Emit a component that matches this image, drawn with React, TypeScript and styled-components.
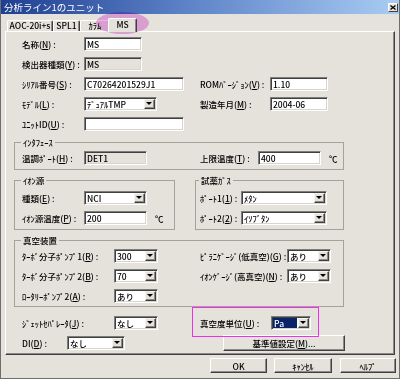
import React from 'react';
import styled, { createGlobalStyle } from 'styled-components';

const FS = '8.5px';
const BG = '#e5e2dc';

const GlobalStyle = createGlobalStyle`
  html, body {
    margin: 0;
    padding: 0;
    background: ${BG};
  }
  body {
    font-family: "Noto Sans CJK JP", "Liberation Sans", sans-serif;
    font-size: ${FS};
    font-weight: 500;
    color: #000;
  }
`;

const Window = styled.div`
  position: relative;
  width: 400px;
  height: 379px;
  box-sizing: border-box;
  background: ${BG};
  border: 1px solid #6e6e6e;
  border-top: none;
  overflow: hidden;
  display: flex;
  flex-direction: column;
`;

const TitleBar = styled.div`
  height: 14px;
  display: flex;
  align-items: center;
  justify-content: space-between;
  padding: 0 1px 0 3px;
  background: linear-gradient(to right, #1f3f90, #5b80c6 45%, #a9ccf3);
  color: #fff;
  font-size: 9.5px;
  font-weight: 400;
  line-height: 12px;
`;

const CloseBox = styled.div`
  width: 10px;
  height: 9px;
  box-sizing: border-box;
  background: ${BG};
  border: 1px solid;
  border-color: #fff #404040 #404040 #fff;
  display: flex;
  align-items: center;
  justify-content: center;
`;

const Body = styled.div`
  display: flex;
  flex-direction: column;
  padding: 4px 3px 0 4px;
`;

const TabStrip = styled.div`
  display: flex;
  align-items: flex-end;
  height: 13px;
  padding-left: 2px;
`;

const Tab = styled.div<{ $w: number; $active?: boolean }>`
  position: relative;
  box-sizing: border-box;
  width: ${(p) => p.$w}px;
  height: ${(p) => (p.$active ? 14 : 11)}px;
  margin: ${(p) => (p.$active ? '0 -2px -1px -2px' : '0')};
  z-index: ${(p) => (p.$active ? 1 : 0)};
  background: ${BG};
  border: 1px solid;
  border-color: #fff #404040 transparent #fff;
  border-bottom: none;
  border-radius: 2px 2px 0 0;
  box-shadow: inset -1px 0 0 #8a8a8a;
  display: flex;
  justify-content: center;
  padding-top: ${(p) => (p.$active ? 1 : 0)}px;
  line-height: 9px;
  font-size: ${FS};
  white-space: nowrap;
`;

const Panel = styled.div`
  width: 390px;
  height: 324px;
  box-sizing: border-box;
  border: 1px solid;
  border-color: #fff #404040 #404040 #fff;
  box-shadow: inset -1px -1px 0 #8a8a8a;
  padding: 2px 0 0 8px;
  display: flex;
  flex-direction: column;
`;

const Section = styled.div<{ $pl?: number; $mt?: number }>`
  display: flex;
  flex-direction: column;
  padding-left: ${(p) => p.$pl ?? 0}px;
  margin-top: ${(p) => p.$mt ?? 0}px;
`;

const Row = styled.div`
  display: flex;
  align-items: center;
  height: 20px;
`;

const Half = styled.div<{ $w: number }>`
  display: flex;
  align-items: center;
  width: ${(p) => p.$w}px;
  flex: none;
`;

const LabelText = styled.span<{ $w: number }>`
  display: inline-block;
  width: ${(p) => p.$w}px;
  flex: none;
  white-space: nowrap;
  line-height: 12px;
  font-size: ${FS};
`;

const Group = styled.fieldset<{ $w: number; $pl: number; $pt?: number; $pb?: number; $mt?: number }>`
  width: ${(p) => p.$w}px;
  box-sizing: border-box;
  margin: ${(p) => p.$mt ?? 0}px 0 0 0;
  padding: ${(p) => p.$pt ?? 0}px 0 ${(p) => p.$pb ?? 0}px ${(p) => p.$pl}px;
  border: 1px solid #a5a29b;
  min-width: 0;
`;

const Legend = styled.legend`
  padding: 0 2px;
  margin-left: -1px;
  line-height: 12px;
  font-size: ${FS};
  white-space: nowrap;
`;

const GroupPair = styled.div`
  display: flex;
  gap: 20px;
  margin-top: 4px;
`;

const sunken = `
  box-sizing: border-box;
  height: 14px;
  border: 1px solid;
  border-color: #7d7d7d #fff #fff #7d7d7d;
  box-shadow: inset 1px 1px 0 #404040, inset -1px -1px 0 #d8d5ce;
`;

const TextBox = styled.div<{ $w: number; $ro?: boolean }>`
  ${sunken}
  width: ${(p) => p.$w}px;
  flex: none;
  background: ${(p) => (p.$ro ? BG : '#fff')};
  padding: 0 2px;
  font-size: ${FS};
  line-height: 12px;
  white-space: nowrap;
  overflow: hidden;
`;

const Combo = styled.div<{ $w: number }>`
  ${sunken}
  width: ${(p) => p.$w}px;
  flex: none;
  background: #fff;
  padding: 1px;
  display: flex;
  align-items: stretch;
`;

const ComboText = styled.span<{ $sel?: boolean }>`
  flex: 1;
  padding-left: 1px;
  margin-right: 1px;
  font-size: ${FS};
  line-height: 10px;
  white-space: nowrap;
  overflow: hidden;
  background: ${(p) => (p.$sel ? '#0a246a' : 'transparent')};
  color: ${(p) => (p.$sel ? '#fff' : '#000')};
`;

const DropBtn = styled.span`
  width: 11px;
  flex: none;
  box-sizing: border-box;
  background: ${BG};
  border: 1px solid;
  border-color: #f4f3ef #404040 #404040 #f4f3ef;
  box-shadow: inset -1px -1px 0 #8a8a8a;
  display: flex;
  align-items: center;
  justify-content: center;
  &::after {
    content: '';
    width: 0;
    height: 0;
    margin: 0 1px 1px 0;
    border-left: 3px solid transparent;
    border-right: 3px solid transparent;
    border-top: 3px solid #000;
  }
`;

const Unit = styled.span`
  margin-left: 8px;
  line-height: 12px;
  font-size: ${FS};
`;

const PushButton = styled.div<{ $w: number; $h?: number; $ml?: number }>`
  width: ${(p) => p.$w}px;
  height: ${(p) => p.$h ?? 15}px;
  margin-left: ${(p) => p.$ml ?? 0}px;
  flex: none;
  box-sizing: border-box;
  background: ${BG};
  border: 1px solid;
  border-color: #fff #404040 #404040 #fff;
  box-shadow: inset -1px -1px 0 #8a8a8a;
  display: flex;
  align-items: center;
  justify-content: center;
  font-size: ${FS};
  line-height: 12px;
  white-space: nowrap;
`;

const ButtonBar = styled.div`
  display: flex;
  justify-content: flex-end;
  margin-top: 3px;
`;

const TabMark = styled.div`
  position: absolute;
  left: 95px;
  top: 12px;
  width: 53px;
  height: 22px;
  border-radius: 50%;
  background: rgb(238, 165, 238);
  mix-blend-mode: multiply;
  opacity: 0.85;
  pointer-events: none;
`;

const FieldMark = styled.div`
  position: absolute;
  left: 191px;
  top: 307px;
  width: 127px;
  height: 30px;
  box-sizing: border-box;
  border: 1px solid #ee30ee;
  pointer-events: none;
`;

const Lbl: React.FC<{ w: number; t: string; k: string; tail?: string }> = ({ w, t, k, tail = ' :' }) => (
  <LabelText $w={w}>
    {t}(<u>{k}</u>){tail}
  </LabelText>
);

const Select: React.FC<{ w: number; v: string; sel?: boolean }> = ({ w, v, sel }) => (
  <Combo $w={w}>
    <ComboText $sel={sel}>{v}</ComboText>
    <DropBtn />
  </Combo>
);

const App: React.FC = () => {
  return (
    <>
      <GlobalStyle />
      <Window>
        <TitleBar>
          <span>分析ライン1のユニット</span>
          <CloseBox>
            <svg width="6" height="5" viewBox="0 0 6 5">
              <path d="M0.5 0.5 L5.5 4.5 M5.5 0.5 L0.5 4.5" stroke="#000" strokeWidth="1.3" />
            </svg>
          </CloseBox>
        </TitleBar>
        <Body>
          <TabStrip>
            <Tab $w={46}>AOC-20i+s</Tab>
            <Tab $w={27}>SPL1</Tab>
            <Tab $w={30}>ｶﾗﾑ</Tab>
            <Tab $w={29} $active>
              MS
            </Tab>
          </TabStrip>
          <Panel>
            <Section $pl={8}>
              <Row>
                <Lbl w={62} t="名称" k="N" />
                <TextBox $w={58}>MS</TextBox>
              </Row>
              <Row>
                <Lbl w={62} t="検出器種類" k="Y" />
                <TextBox $w={58} $ro>
                  MS
                </TextBox>
              </Row>
              <Row>
                <Half $w={178}>
                  <Lbl w={62} t="ｼﾘｱﾙ番号" k="S" />
                  <TextBox $w={100}>C70264201529J1</TextBox>
                </Half>
                <Lbl w={70} t="ROMﾊﾞｰｼﾞｮﾝ" k="V" />
                <TextBox $w={58}>1.10</TextBox>
              </Row>
              <Row>
                <Half $w={178}>
                  <Lbl w={62} t="ﾓﾃﾞﾙ" k="L" />
                  <Select w={73} v="ﾃﾞｭｱﾙTMP" />
                </Half>
                <Lbl w={70} t="製造年月" k="M" />
                <TextBox $w={58}>2004-06</TextBox>
              </Row>
              <Row>
                <Lbl w={62} t="ﾕﾆｯﾄID" k="U" />
                <TextBox $w={100} />
              </Row>
            </Section>

            <Group $w={330} $pl={7} $pb={1} $mt={2}>
              <Legend>ｲﾝﾀﾌｪｰｽ</Legend>
              <Row>
                <Half $w={178}>
                  <Lbl w={62} t="温調ﾎﾟｰﾄ" k="H" />
                  <TextBox $w={63} $ro>
                    DET1
                  </TextBox>
                </Half>
                <Lbl w={58} t="上限温度" k="T" />
                <TextBox $w={63}>400</TextBox>
                <Unit>℃</Unit>
              </Row>
            </Group>

            <GroupPair>
              <Group $w={161} $pl={7} $pt={2} $pb={1}>
                <Legend>ｲｵﾝ源</Legend>
                <Row>
                  <Lbl w={62} t="種類" k="E" />
                  <Select w={63} v="NCI" />
                </Row>
                <Row>
                  <Lbl w={62} t="ｲｵﾝ源温度" k="P" />
                  <TextBox $w={63}>200</TextBox>
                  <Unit>℃</Unit>
                </Row>
              </Group>
              <Group $w={149} $pl={4} $pt={2} $pb={1}>
                <Legend>試薬ｶﾞｽ</Legend>
                <Row>
                  <Lbl w={41} t="ﾎﾟｰﾄ1" k="1" />
                  <Select w={86} v="ﾒﾀﾝ" />
                </Row>
                <Row>
                  <Lbl w={41} t="ﾎﾟｰﾄ2" k="2" />
                  <Select w={86} v="ｲｿﾌﾞﾀﾝ" />
                </Row>
              </Group>
            </GroupPair>

            <Group $w={330} $pl={7} $mt={4}>
              <Legend>真空装置</Legend>
              <Row>
                <Half $w={178}>
                  <Lbl w={92} t="ﾀｰﾎﾞ分子ﾎﾟﾝﾌﾟ1" k="R" />
                  <Select w={44} v="300" />
                </Half>
                <Lbl w={87} t="ﾋﾟﾗﾆｹﾞｰｼﾞ(低真空)" k="G" />
                <Select w={44} v="あり" />
              </Row>
              <Row>
                <Half $w={178}>
                  <Lbl w={92} t="ﾀｰﾎﾞ分子ﾎﾟﾝﾌﾟ2" k="B" />
                  <Select w={44} v="70" />
                </Half>
                <Lbl w={87} t="ｲｵﾝｹﾞｰｼﾞ(高真空)" k="N" />
                <Select w={44} v="あり" />
              </Row>
              <Row>
                <Lbl w={92} t="ﾛｰﾀﾘｰﾎﾟﾝﾌﾟ2" k="A" />
                <Select w={44} v="あり" />
              </Row>
            </Group>

            <Section $pl={8} $mt={6}>
              <Row>
                <Half $w={178}>
                  <Lbl w={92} t="ｼﾞｪｯﾄｾﾊﾟﾚｰﾀ" k="J" />
                  <Select w={44} v="なし" />
                </Half>
                <Lbl w={71} t="真空度単位" k="U" />
                <Select w={40} v="Pa" sel />
              </Row>
              <Row>
                <Half $w={201}>
                  <Lbl w={45} t="DI" k="D" />
                  <Select w={58} v="なし" />
                </Half>
                <PushButton $w={122} $h={16}>
                  基準値設定(<u>M</u>)...
                </PushButton>
              </Row>
            </Section>
          </Panel>
          <ButtonBar>
            <PushButton $w={57}>OK</PushButton>
            <PushButton $w={58} $ml={7}>
              ｷｬﾝｾﾙ
            </PushButton>
            <PushButton $w={56} $ml={8}>
              ﾍﾙﾌﾟ
            </PushButton>
          </ButtonBar>
        </Body>
        <TabMark />
        <FieldMark />
      </Window>
    </>
  );
};

export default App;
